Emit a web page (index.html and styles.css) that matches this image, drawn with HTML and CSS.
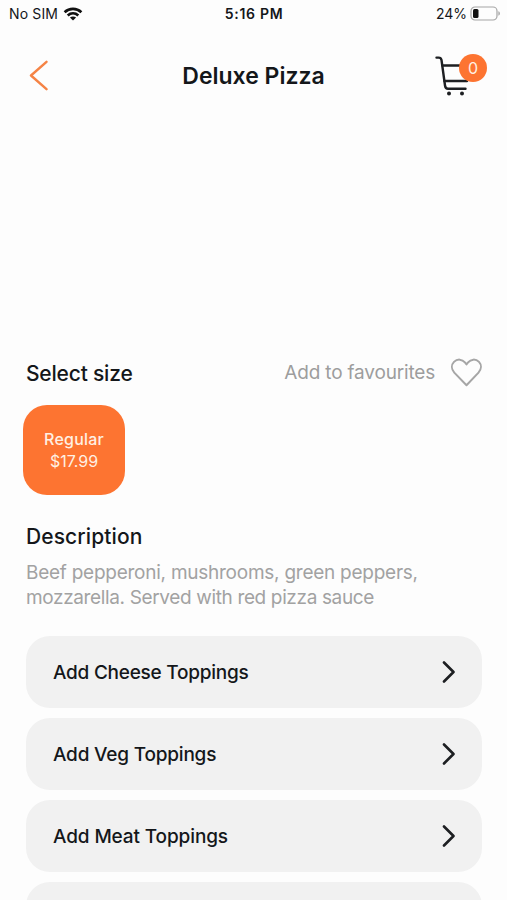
FILE: index.html
```html
<!DOCTYPE html>
<html lang="en">
<head>
  <meta charset="UTF-8">
  <meta name="viewport" content="width=device-width, initial-scale=1.0">
  <title>Deluxe Pizza</title>
  <link rel="stylesheet" href="styles.css">
</head>
<body>
  <div class="screen">
    <div class="status-bar">
      <div class="carrier">
        <span>No SIM</span>
        <svg width="20" height="14" viewBox="0 0 20 14" fill="none" stroke="#111" stroke-width="2.7">
          <path d="M1.6 5.2C6.4 .8 13.6 .8 18.4 5.2"/>
          <path d="M4.7 8.4C7.8 5.7 12.2 5.7 15.3 8.4"/>
          <path d="M10 13.6L6.9 10.5C8.7 9 11.3 9 13.1 10.5Z" fill="#111" stroke="none"/>
        </svg>
      </div>
      <div class="time">5:16 PM</div>
      <div class="battery">
        <span>24%</span>
        <svg width="31" height="15" viewBox="0 0 31 15">
          <rect x="1" y="1" width="26" height="13" rx="4" fill="none" stroke="#a5a5a5" stroke-width="1.2"/>
          <rect x="3" y="3" width="5.5" height="9" rx="1.5" fill="#111"/>
          <path d="M28.4 5.3C30.4 6 30.4 9 28.4 9.7Z" fill="#a5a5a5"/>
        </svg>
      </div>
    </div>

    <div class="header">
      <button class="back" aria-label="Back">
        <svg width="20" height="32" viewBox="0 0 20 32" fill="none" stroke="#f58345" stroke-width="2.4" stroke-linecap="round" stroke-linejoin="round">
          <path d="M18.5 1.8L3 15.5L18.5 29.2"/>
        </svg>
      </button>
      <h1>Deluxe Pizza</h1>
      <div class="cart">
        <svg width="36" height="42" viewBox="0 0 36 42" fill="none" stroke="#1d1f22" stroke-width="2.4" stroke-linecap="round" stroke-linejoin="round">
          <path d="M1.5 2.6H3.6Q6 2.6 6.5 5L10 30.5Q10.5 33.8 13 33.8H30.5"/>
          <path d="M7.5 10.5H30"/>
          <path d="M9.5 26H32L34.5 10.5"/>
          <circle cx="14" cy="38.4" r="2" fill="#1d1f22" stroke="none"/>
          <circle cx="27" cy="38.4" r="2" fill="#1d1f22" stroke="none"/>
        </svg>
        <span class="badge">0</span>
      </div>
    </div>

    <div class="photo"></div>

    <div class="size-row">
      <h2 class="size-title">Select size</h2>
      <div class="favourite">
        <span>Add to favourites</span>
        <svg width="32" height="29" viewBox="0 0 32 29" fill="none" stroke="#a6a6a6" stroke-width="2" stroke-linejoin="round">
          <path d="M16.5 27.2L4.3 14.6C1.2 11.2 1.2 6.8 4 3.9C7.3 .6 12.2 1 14.9 4.4L16.5 6.4L18.1 4.4C20.8 1 25.7 .6 29 3.9C31.6 6.8 31.6 11.2 28.5 14.6Z"/>
        </svg>
      </div>
    </div>

    <div class="size-card">
      <span class="size-name">Regular</span>
      <span class="size-price">$17.99</span>
    </div>

    <h2 class="desc-title">Description</h2>
    <p class="desc"><span class="line-one">Beef pepperoni, mushrooms, green peppers,</span><br><span class="line-two">mozzarella. Served with red pizza sauce</span></p>

    <div class="toppings">
      <div class="topping">
        <span class="cheese">Add Cheese Toppings</span>
        <svg class="chevron" viewBox="0 0 14 22"><path d="M2 1.5L11.5 11L2 20.5"/></svg>
      </div>
      <div class="topping">
        <span class="veg">Add Veg Toppings</span>
        <svg class="chevron" viewBox="0 0 14 22"><path d="M2 1.5L11.5 11L2 20.5"/></svg>
      </div>
      <div class="topping">
        <span class="meat">Add Meat Toppings</span>
        <svg class="chevron" viewBox="0 0 14 22"><path d="M2 1.5L11.5 11L2 20.5"/></svg>
      </div>
      <div class="topping"></div>
    </div>
  </div>
</body>
</html>
```
FILE: styles.css
```css
* {
  box-sizing: border-box;
}

body {
  margin: 0;
  background: #fdfdfd;
  font-family: Inter, "Liberation Sans", sans-serif;
  color: #14171a;
}

h1,
h2,
p {
  margin: 0;
}

.screen {
  height: 900px;
  overflow: hidden;
}

.status-bar {
  display: grid;
  grid-template-columns: 1fr auto 1fr;
  align-items: center;
  height: 28px;
  padding: 0 6px 1px 9px;
  font-size: 14px;
}

.carrier,
.battery {
  display: flex;
  align-items: center;
}

.carrier {
  gap: 5px;
  letter-spacing: 0.15px;
}

.battery {
  justify-content: flex-end;
  gap: 3px;
}

.time {
  padding-right: 2px;
  font-weight: 600;
  letter-spacing: 0.7px;
}

.header {
  display: grid;
  grid-template-columns: 60px 1fr 60px;
  align-items: center;
  height: 96px;
  padding: 0 12px 0 28px;
}

.back {
  display: flex;
  padding: 0;
  border: none;
  background: none;
}

h1 {
  padding-right: 16px;
  font-size: 23px;
  font-weight: 600;
  text-align: center;
}

.cart {
  position: relative;
  height: 42px;
}

.badge {
  position: absolute;
  top: -1px;
  left: 24px;
  width: 28px;
  height: 28px;
  border-radius: 50%;
  background: #fd7431;
  color: #fff0e3;
  font-size: 16px;
  line-height: 28px;
  text-align: center;
}

.photo {
  height: 227px;
}

.size-row {
  display: flex;
  justify-content: space-between;
  align-items: center;
  height: 42px;
  padding: 0 25px 0 26px;
}

h2 {
  font-size: 21px;
  font-weight: 500;
  line-height: 28px;
}

.size-title {
  padding-top: 3px;
  letter-spacing: -0.2px;
}

.favourite {
  display: flex;
  align-items: center;
  gap: 15px;
  color: #9d9d9d;
  font-size: 19px;
  letter-spacing: -0.18px;
}

.size-card {
  display: flex;
  flex-direction: column;
  align-items: center;
  justify-content: center;
  width: 102px;
  height: 90px;
  margin: 12px 0 0 23px;
  border-radius: 24px;
  background: #fd7431;
  color: #fff0e3;
  font-size: 16px;
  line-height: 22px;
}

.size-name {
  font-weight: 500;
  letter-spacing: 0.2px;
}

.desc-title {
  margin: 28px 0 0 26px;
  letter-spacing: 0.1px;
}

.desc {
  margin: 9px 26px 0;
  color: #a2a2a2;
  font-size: 19px;
  line-height: 25px;
  white-space: nowrap;
}

.line-one {
  letter-spacing: -0.25px;
}

.line-two {
  letter-spacing: -0.36px;
}

.toppings {
  display: flex;
  flex-direction: column;
  gap: 10px;
  margin: 26px 25px 0 26px;
}

.topping {
  display: flex;
  flex: none;
  justify-content: space-between;
  align-items: center;
  height: 72px;
  padding: 0 26px 0 27px;
  border-radius: 24px;
  background: #f1f1f1;
  font-size: 19px;
  font-weight: 500;
}

.cheese {
  letter-spacing: -0.25px;
}

.veg {
  letter-spacing: -0.2px;
}

.meat {
  letter-spacing: -0.12px;
}

.chevron {
  width: 14px;
  height: 22px;
  fill: none;
  stroke: #1d1f22;
  stroke-width: 2.6;
  stroke-linecap: round;
  stroke-linejoin: round;
}
```
